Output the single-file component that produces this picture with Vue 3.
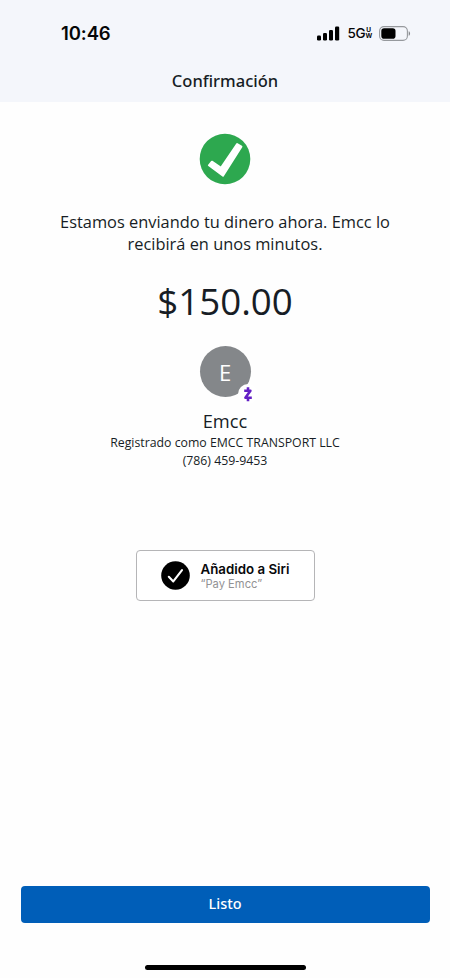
<script setup>
const carrier = ['U', 'W']
</script>

<template>
  <main class="screen">
    <header class="header">
      <div class="status">
        <span class="time">10:46</span>
        <div class="indicators">
          <svg class="signal" viewBox="0 0 23 15" aria-hidden="true">
            <rect x="0" y="9.5" width="4" height="5" rx="1.2" />
            <rect x="6" y="7" width="4" height="7.5" rx="1.2" />
            <rect x="12" y="4" width="4" height="10.5" rx="1.2" />
            <rect x="18" y="0.5" width="4.2" height="14" rx="1.2" />
          </svg>
          <span class="network">5G</span>
          <span class="carrier"><i v-for="c in carrier" :key="c">{{ c }}</i></span>
          <svg class="battery" viewBox="0 0 32 15" aria-hidden="true">
            <rect x="0.6" y="0.6" width="27.8" height="13.8" rx="4.4" fill="none" stroke="#96999d" stroke-width="1.1" />
            <rect x="2.3" y="2.3" width="14.2" height="10.4" rx="2.8" fill="#000" />
            <path d="M29.7 5.2c1.8.7 1.8 3.9 0 4.6z" fill="#85888c" />
          </svg>
        </div>
      </div>
      <h1 class="title">Confirmación</h1>
    </header>

    <section class="content">
      <svg class="success" viewBox="0 0 52 52" aria-hidden="true">
        <circle cx="26" cy="26" r="25.3" fill="#2da84f" />
        <path d="M9.9 32.3 12.9 28.7 22 34.9 38.1 11.1 42.4 13.7 24 42.6Z" fill="#fff" stroke="#fff" stroke-width="2" stroke-linejoin="round" />
      </svg>
      <p class="message">Estamos enviando tu dinero ahora. Emcc lo<br />recibirá en unos minutos.</p>
      <p class="amount">$150.00</p>
      <div class="avatar">
        <span class="initial">E</span>
        <svg class="zelle" viewBox="0 0 20 20" aria-hidden="true">
          <circle cx="10" cy="10" r="10" fill="#fff" />
          <path d="M6.2 6.7H12.4L7.4 13.7H13.8M10 3.2V6.5M10 13.9V17.3" fill="none" stroke="#6320c5" stroke-width="2.6" stroke-linejoin="round" />
        </svg>
      </div>
      <h2 class="name">Emcc</h2>
      <p class="detail">Registrado como EMCC TRANSPORT LLC</p>
      <p class="detail">(786) 459-9453</p>
      <button class="siri">
        <svg class="siri-icon" viewBox="0 0 29 29" aria-hidden="true">
          <circle cx="14.5" cy="14.5" r="14.3" fill="#000" />
          <path d="M7.8 15.8 12.3 20.4 21 9.1" fill="none" stroke="#fff" stroke-width="2.1" stroke-linecap="round" stroke-linejoin="round" />
        </svg>
        <span class="siri-copy">
          <strong>Añadido a Siri</strong>
          <span>“Pay Emcc”</span>
        </span>
      </button>
    </section>

    <footer class="footer">
      <button class="done">Listo</button>
      <div class="home"></div>
    </footer>
  </main>
</template>

<style>
body {
  margin: 0;
  background: #fff;
}
</style>

<style scoped>
.screen {
  width: 450px;
  height: 978px;
  display: flex;
  flex-direction: column;
  overflow: hidden;
  background: #fefefe;
  color: #171d25;
  font-family: "Open Sans", "Noto Sans", sans-serif;
}
.header {
  height: 102px;
  flex: none;
  background: #f4f6fb;
}
.status {
  height: 66px;
  box-sizing: border-box;
  padding: 0 39px 0 61px;
  display: flex;
  align-items: center;
  justify-content: space-between;
  color: #050608;
  font-family: Inter, sans-serif;
}
.time {
  font-size: 18.5px;
  font-weight: 600;
  letter-spacing: -0.1px;
}
.indicators {
  display: flex;
  align-items: center;
}
.signal {
  width: 23px;
  height: 15px;
  margin-right: 8px;
}
.network {
  font-size: 13.5px;
  font-weight: 500;
  letter-spacing: -0.5px;
  margin-right: 0.5px;
}
.carrier {
  width: 6.5px;
  margin-right: 7px;
  display: flex;
  flex-direction: column;
  align-items: center;
  font-size: 6.5px;
  line-height: 6px;
  font-weight: 700;
}
.carrier i {
  height: 6px;
  font-style: normal;
}
.battery {
  width: 32px;
  height: 15px;
}
.title {
  margin: 3px 0 0;
  text-align: center;
  font-family: "Noto Sans", sans-serif;
  font-size: 16.5px;
  line-height: 24px;
  font-weight: 500;
}
.content {
  flex: 1;
  display: flex;
  flex-direction: column;
  align-items: center;
  padding-top: 31px;
}
.success {
  flex: none;
  width: 52px;
  height: 52px;
}
.message {
  margin: 26px 0 0;
  text-align: center;
  font-size: 16.4px;
  line-height: 22px;
  white-space: nowrap;
}
.amount {
  margin: 20px 0 0;
  font-size: 36.7px;
  line-height: 52px;
}
.avatar {
  position: relative;
  flex: none;
  width: 51px;
  height: 51px;
  margin-top: 19px;
  border-radius: 50%;
  background: #84878a;
  color: #fff;
  display: flex;
  align-items: center;
  justify-content: center;
}
.initial {
  font-size: 22px;
  line-height: 28px;
}
.zelle {
  position: absolute;
  left: 38px;
  top: 38px;
  width: 20px;
  height: 20px;
}
.name {
  margin: 11px 0 0;
  font-size: 18.3px;
  line-height: 26px;
  font-weight: 400;
}
.detail {
  margin: 0;
  font-size: 12.3px;
  line-height: 18px;
  white-space: nowrap;
}
.siri {
  width: 179px;
  height: 51px;
  flex: none;
  box-sizing: border-box;
  margin-top: 80px;
  padding: 0 0 0 24px;
  display: flex;
  align-items: center;
  gap: 11px;
  border: 1px solid #b5b5b7;
  border-radius: 4px;
  background: #fff;
  font-family: Inter, sans-serif;
  text-align: left;
}
.siri-icon {
  width: 29px;
  height: 29px;
}
.siri-copy {
  display: flex;
  flex-direction: column;
  padding-top: 2px;
  white-space: nowrap;
}
.siri-copy strong {
  color: #08090b;
  font-size: 13.3px;
  line-height: 15px;
  font-weight: 600;
}
.siri-copy span {
  color: #929294;
  font-size: 11.2px;
  line-height: 15px;
}
.footer {
  flex: none;
  height: 92.5px;
  padding: 0 20px;
  display: flex;
  flex-direction: column;
  align-items: center;
}
.done {
  width: 409px;
  height: 37px;
  border: 0;
  border-radius: 4px;
  background: #005eb8;
  color: #fff;
  font: 500 14.4px/20px "Noto Sans", sans-serif;
}
.home {
  width: 161px;
  height: 5px;
  margin-top: 42px;
  border-radius: 3px;
  background: #000;
}
</style>
